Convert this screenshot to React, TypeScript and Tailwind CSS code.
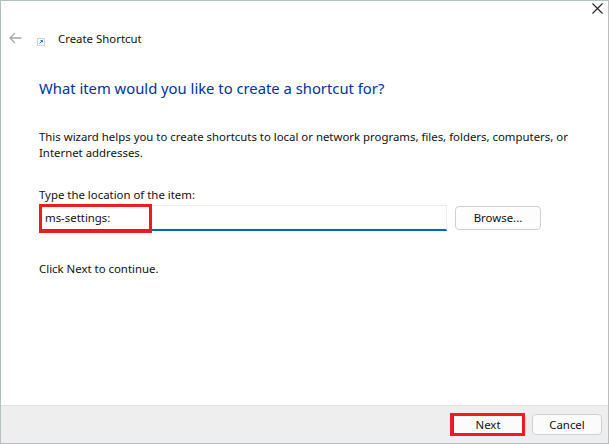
export default function App() {
  const font = { fontFamily: '"Noto Sans", sans-serif' };
  return (
    <div style={font} className="w-[609px] h-[444px] flex flex-col border border-[#b4c0bd] bg-white text-[11.4px] leading-[16px] text-[#111111] overflow-hidden">
      <div className="flex-1 flex flex-col min-h-0">
        <div className="h-[18px] shrink-0 relative">
          <svg className="absolute top-[2px] right-[5px]" width="11" height="11" viewBox="0 0 11 11">
            <path d="M0.5 0.5 L10.5 10.5 M10.5 0.5 L0.5 10.5" stroke="#222" strokeWidth="1.1" fill="none" />
          </svg>
        </div>
        <div className="flex items-center h-[40px] pl-[8px] shrink-0">
          <svg width="13" height="12" viewBox="0 0 13 12" className="-mt-[2px]">
            <path d="M12.5 6 H1 M6 1 L1 6 L6 11" stroke="#a3a6ab" strokeWidth="1.3" fill="none" />
          </svg>
          <svg width="8" height="8" viewBox="0 0 8 8" className="ml-[15px] mt-[6px]">
            <rect x="0.5" y="0.5" width="7" height="7" fill="#fff" stroke="#cfd4dc" />
            <path d="M2.5 5.5 L5.5 2.5 M3.5 2.5 H5.5 V4.5" stroke="#2f7fd6" strokeWidth="1" fill="none" />
          </svg>
          <span className="ml-[13px] -mt-[1px]">Create Shortcut</span>
        </div>
        <div className="pl-[38px] pr-[20px] flex flex-col">
          <h1 className="text-[14.8px] leading-[20px] font-normal text-[#003399] mt-[19px]">What item would you like to create a shortcut for?</h1>
          <p className="mt-[31px] w-[540px]">This wizard helps you to create shortcuts to local or network programs, files, folders, computers, or Internet addresses.</p>
          <div className="mt-[26px]">Type the location of the item:</div>
          <div className="flex items-center mt-[2px]">
            <div className="relative w-[408px] h-[26px] border border-[#ececec] border-b-2 border-b-[#0067c0] flex items-center pl-[5px]">
              ms-settings:
              <div className="absolute -left-[1px] -top-[2px] w-[113px] h-[29px] border-[3px] border-[#ed1c24]" />
            </div>
            <button className="ml-[8px] w-[86px] h-[24px] rounded-[4px] border border-[#d0d0d0] bg-[#fdfdfd] text-center">Browse...</button>
          </div>
          <div className="mt-[30px]">Click Next to continue.</div>
        </div>
      </div>
      <div className="h-[38px] shrink-0 bg-[#eeeeee] border-t border-[#e2e2e2] flex items-center justify-end pr-[6px] gap-[7px]">
        <button className="w-[75px] h-[23px] border-[3px] border-[#ed1c24] bg-[#fbfbfb]">
          <div className="h-full border-l border-[#0067c0] flex items-center justify-center">Next</div>
        </button>
        <button className="w-[70px] h-[21px] rounded-[4px] border border-[#d0d0d0] bg-[#fbfbfb] text-center">Cancel</button>
      </div>
    </div>
  );
}
